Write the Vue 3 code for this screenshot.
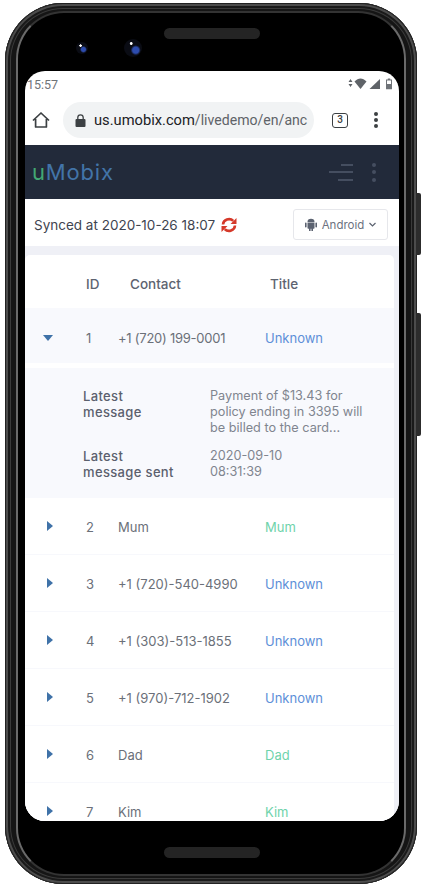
<script setup>
const rows = [
  { id: 2, contact: 'Mum', title: 'Mum', known: true },
  { id: 3, contact: '+1 (720)-540-4990', title: 'Unknown' },
  { id: 4, contact: '+1 (303)-513-1855', title: 'Unknown' },
  { id: 5, contact: '+1 (970)-712-1902', title: 'Unknown' },
  { id: 6, contact: 'Dad', title: 'Dad', known: true },
  { id: 7, contact: 'Kim', title: 'Kim', known: true }
]
</script>

<template>
  <div class="page">
    <div class="btn power"></div>
    <div class="btn volume"></div>
    <div class="phone">
      <div class="bezel">
        <div class="top">
          <span class="lens small"></span>
          <span class="lens big"></span>
          <span class="speaker"></span>
        </div>
        <div class="screen">
          <div class="status">
            <span>15:57</span>
            <svg width="46" height="12" viewBox="0 0 46 12">
              <path d="M2.500 1 4.500 4H.5zM2.500 9 .5 6h4z" fill="#5f6368" />
              <path d="M6.500 3.500C8.500 1.500 10.500 .5 12.500 .5s4 1 6 3l-6 7.500z" fill="#5f6368" />
              <path d="M21.500 11 32 1v10z" fill="#5f6368" />
              <path d="M38 1.500h1.800V.5h2.400v1H44v9.700h-6z" fill="#6f7378" />
              <path d="M39 2.500h4V6h-4z" fill="#fff" />
            </svg>
          </div>
          <div class="chrome">
            <svg class="home" width="18" height="16" viewBox="0 0 18 16">
              <path d="M1 8.500 9 1l8 7.500M3.600 7V15h10.800V7" fill="none" stroke="#3c4043" stroke-width="1.700" stroke-linejoin="round" />
            </svg>
            <div class="url">
              <svg width="11" height="13" viewBox="0 0 11 13">
                <rect x="0.500" y="5" width="10" height="8" rx="1" fill="#3c4043" />
                <path d="M2.800 5.500V3.500a2.700 2.700 0 0 1 5.400 0v2" fill="none" stroke="#3c4043" stroke-width="1.300" />
              </svg>
              <span class="url-text"><b>us.umobix.com</b>/livedemo/en/anc</span>
            </div>
            <span class="tabs">3</span>
            <span class="dots"><i></i><i></i><i></i></span>
          </div>
          <div class="appbar">
            <div class="logo"><em>u</em>Mobix</div>
            <div class="appbar-tools">
              <span class="burger"><i></i><i></i><i></i></span>
              <span class="dots muted"><i></i><i></i><i></i></span>
            </div>
          </div>
          <div class="sync">
            <span class="sync-text">Synced at 2020-10-26 18:07</span>
            <svg width="16" height="16" viewBox="0 0 16 16" fill="#d5392a">
              <path d="M2 7.500a6 5.700 0 0 1 10.300-3.600" fill="none" stroke="#d5392a" stroke-width="2.600" />
              <path d="M15.500 1v6h-6z" />
              <path d="M14 8.500a6 5.700 0 0 1-10.300 3.600" fill="none" stroke="#d5392a" stroke-width="2.600" />
              <path d="M.5 15V9h6z" />
            </svg>
            <div class="select">
              <svg width="12" height="13" viewBox="0 0 12 13" fill="#5b6270">
                <path d="M2.500 4.500h7V10a.8.8 0 0 1-.8.800H8v1.700a.8.8 0 0 1-1.600 0v-1.700h-.8v1.700a.8.8 0 0 1-1.600 0v-1.700h-.7a.8.8 0 0 1-.8-.8zM2.500 4a3.500 3.200 0 0 1 7 0zM0 5.300a.8.800 0 0 1 1.600 0v3.400a.8.800 0 0 1-1.600 0zM10.400 5.300a.8.800 0 0 1 1.600 0v3.400a.8.800 0 0 1-1.600 0z" />
              </svg>
              <span>Android</span>
              <svg width="7" height="5" viewBox="0 0 7 5" fill="none" stroke="#5b6270" stroke-width="1.200"><path d="M.5 1 3.500 4l3-3" /></svg>
            </div>
          </div>
          <div class="content">
            <div class="card">
              <div class="row head">
                <span></span>
                <span class="c-id">ID</span>
                <span class="c-contact">Contact</span>
                <span class="c-title">Title</span>
              </div>
              <div class="row open">
                <span class="arrow down"></span>
                <span class="c-id">1</span>
                <span class="c-contact">+1 (720) 199-0001</span>
                <span class="c-title unknown">Unknown</span>
              </div>
              <div class="detail">
                <div class="d-label">Latest<br />message</div>
                <div class="d-value">Payment of $13.43 for<br />policy ending in 3395 will<br />be billed to the card...</div>
                <div class="d-label">Latest<br />message sent</div>
                <div class="d-value">2020-09-10<br />08:31:39</div>
              </div>
              <div v-for="r in rows" :key="r.id" class="row">
                <span class="arrow"></span>
                <span class="c-id">{{ r.id }}</span>
                <span class="c-contact">{{ r.contact }}</span>
                <span class="c-title" :class="r.known ? 'known' : 'unknown'">{{ r.title }}</span>
              </div>
            </div>
          </div>
        </div>
        <div class="bottom"><span class="speaker"></span></div>
      </div>
    </div>
  </div>
</template>

<style scoped>
.page {
  position: relative;
  width: 422px;
  height: 888px;
  background: #fff;
  font-family: "Inter", "Open Sans", sans-serif;
  overflow: hidden;
}
.phone {
  width: 412px;
  height: 881px;
  margin: 3px 0 0 5px;
  box-sizing: border-box;
  padding: 8px 11px;
  border-radius: 58px;
  background: #151515;
  box-shadow:
    inset 0 0 0 1px #222,
    inset 0 0 0 3px #4c4c4c,
    inset 0 0 0 5px #1a1a1a,
    inset 0 0 0 6px #3a3a3a;
}
.bezel {
  height: 100%;
  box-sizing: border-box;
  padding: 0 5px 0 7px;
  border-radius: 48px;
  background: #000;
  border: 2px solid #6a6a6a;
  border-top-color: #333;
  border-bottom-color: #333;
  display: flex;
  flex-direction: column;
  overflow: hidden;
}
.top {
  height: 58px;
  flex: none;
  position: relative;
}
.lens {
  position: absolute;
  border-radius: 50%;
}
.small {
  left: 51px;
  top: 29px;
  width: 12px;
  height: 12px;
  background:
    radial-gradient(circle at 38% 30%, #fff 0 1px, transparent 1.500px),
    radial-gradient(circle at 62% 62%, #2d4cae 0 2px, transparent 3.500px),
    #0a0c14;
}
.big {
  left: 99px;
  top: 26px;
  width: 18px;
  height: 18px;
  background:
    radial-gradient(circle at 40% 25%, #fff 0 1px, transparent 1.800px),
    radial-gradient(circle at 65% 62%, #2d4cae 0 3px, transparent 5px),
    #0a0c14;
}
.speaker {
  display: block;
  width: 96px;
  height: 11px;
  border-radius: 6px;
  background: #242424;
}
.top .speaker {
  position: absolute;
  left: 139px;
  top: 15px;
}
.screen {
  height: 750px;
  flex: none;
  border-radius: 20px;
  background: #fff;
  overflow: hidden;
  display: flex;
  flex-direction: column;
}
.status {
  height: 24px;
  flex: none;
  box-sizing: border-box;
  padding: 2px 5px 0 2px;
  display: flex;
  justify-content: space-between;
  align-items: center;
  font-size: 12.500px;
  color: #6f7378;
  font-family: "Roboto", sans-serif;
}
.chrome {
  height: 50px;
  flex: none;
  display: flex;
  align-items: center;
  padding-left: 7px;
}
.home { flex: none; }
.url {
  width: 251px;
  height: 36px;
  flex: none;
  box-sizing: border-box;
  margin-left: 13px;
  padding: 0 0 0 12px;
  border-radius: 18px;
  background: #f1f3f4;
  display: flex;
  align-items: center;
  gap: 8px;
}
.url svg { flex: none; }
.url-text {
  white-space: nowrap;
  font-family: "Roboto", sans-serif;
  font-size: 14.100px;
  color: #5f6368;
}
.url-text b {
  font-size: 14.700px;
  font-weight: 400;
  color: #202124;
}
.tabs {
  width: 16px;
  height: 15px;
  box-sizing: border-box;
  margin-left: 18px;
  border: 1.500px solid #3c4043;
  border-radius: 3px;
  font: 500 10px/12px "Roboto", sans-serif;
  text-align: center;
  color: #3c4043;
}
.dots {
  margin-left: 26px;
  display: flex;
  flex-direction: column;
  gap: 2px;
}
.dots i {
  display: block;
  width: 4px;
  height: 4px;
  border-radius: 50%;
  background: #3c4043;
}
.appbar {
  height: 54px;
  flex: none;
  background: #222a3a;
  display: flex;
  align-items: center;
  justify-content: space-between;
  padding: 0 23px 0 7px;
}
.logo {
  font-size: 22px;
  letter-spacing: .8px;
  color: #4274a8;
}
.logo em {
  font-style: normal;
  color: #43a873;
}
.appbar-tools {
  display: flex;
  align-items: center;
  gap: 19px;
}
.burger {
  display: flex;
  flex-direction: column;
  align-items: flex-end;
  gap: 5.500px;
}
.burger i {
  display: block;
  height: 2px;
  width: 24px;
  background: #454e60;
}
.burger i:first-child { width: 12px; }
.burger i:last-child { width: 15px; }
.appbar-tools .dots {
  margin: 0;
  gap: 3.500px;
}
.dots.muted i { background: #454e60; }
.sync {
  height: 47px;
  flex: none;
  box-sizing: border-box;
  padding: 4px 11px 0 9px;
  display: flex;
  align-items: center;
  font-size: 13.500px;
  color: #3f4450;
}
.sync-text { margin-right: 6px; }
.select {
  margin-left: auto;
  width: 95px;
  height: 31px;
  box-sizing: border-box;
  border: 1px solid #e6e7eb;
  border-radius: 3px;
  display: flex;
  align-items: center;
  justify-content: center;
  gap: 5px;
  font-size: 11.500px;
  color: #6c7280;
}
.content {
  flex: 1;
  min-height: 0;
  background: #eff0f6;
  padding: 9px 5px 0 0;
}
.card {
  background: #fff;
  border-radius: 5px 5px 0 0;
}
.row {
  height: 57px;
  box-sizing: border-box;
  padding-top: 1px;
  display: grid;
  grid-template-columns: 51px 42px 147px 1fr;
  align-items: center;
  border-bottom: 1px solid #f7f8fc;
  font-size: 13px;
  color: #6b7079;
}
.row.head {
  height: 53px;
  padding-top: 4px;
  border: 0;
  font-size: 13.500px;
  font-weight: 500;
  color: #5d6370;
}
.head .c-id { padding-left: 10px; }
.head .c-contact { padding-left: 12px; }
.head .c-title { padding-left: 5px; }
.row.open {
  height: 60px;
  padding-top: 4px;
  background: #f8f9fd;
  border: 0;
  border-bottom: 5px solid #fff;
}
.open .c-contact { letter-spacing: -.25px; }
.c-id { padding-left: 10px; }
.arrow {
  justify-self: start;
  margin: -1px 0 0 22px;
  width: 0;
  height: 0;
  border-style: solid;
  border-width: 5.500px 0 5.500px 6px;
  border-color: transparent transparent transparent #3f72a8;
}
.arrow.down {
  margin: 0 0 0 18px;
  border-width: 6px 5.500px 0;
  border-color: #3f72a8 transparent transparent;
}
.unknown { color: #5d8fd8; }
.known { color: #6fd3ab; }
.detail {
  background: #f8f9fd;
  display: grid;
  grid-template-columns: 127px 1fr;
  row-gap: 12px;
  padding: 20px 16px 18px 58px;
  font-size: 12.700px;
  line-height: 16px;
  color: #80858f;
}
.d-label {
  font-size: 13px;
  font-weight: 500;
  letter-spacing: .35px;
  color: #5b606e;
}
.bottom {
  flex: 1;
  display: flex;
  justify-content: center;
  padding: 26px 0 0;
}
.btn {
  position: absolute;
  right: 1px;
  width: 5px;
  background: #2c2c2c;
  border-radius: 0 2px 2px 0;
}
.power { top: 193px; height: 62px; }
.volume { top: 313px; height: 123px; }
</style>
